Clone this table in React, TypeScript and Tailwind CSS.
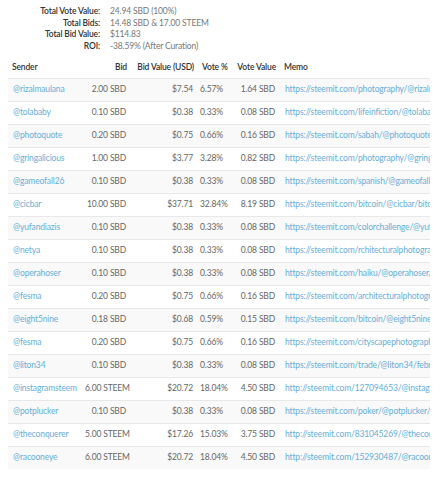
import React from "react";

type Row = {
  sender: string;
  bid: string;
  value: string;
  pct: string;
  vote: string;
  memo: string;
};

const rows: Row[] = [
  { sender: "@rizalmaulana", bid: "2.00 SBD", value: "$7.54", pct: "6.57%", vote: "1.64 SBD", memo: "https://steemit.com/photography/@rizalmaulana/the-beauty-of-nature" },
  { sender: "@tolababy", bid: "0.10 SBD", value: "$0.38", pct: "0.33%", vote: "0.08 SBD", memo: "https://steemit.com/lifeinfiction/@tolababy/my-story" },
  { sender: "@photoquote", bid: "0.20 SBD", value: "$0.75", pct: "0.66%", vote: "0.16 SBD", memo: "https://steemit.com/sabah/@photoquote/photo-of-the-day" },
  { sender: "@gringalicious", bid: "1.00 SBD", value: "$3.77", pct: "3.28%", vote: "0.82 SBD", memo: "https://steemit.com/photography/@gringalicious/winter" },
  { sender: "@gameofall26", bid: "0.10 SBD", value: "$0.38", pct: "0.33%", vote: "0.08 SBD", memo: "https://steemit.com/spanish/@gameofall26/juego" },
  { sender: "@cicbar", bid: "10.00 SBD", value: "$37.71", pct: "32.84%", vote: "8.19 SBD", memo: "https://steemit.com/bitcoin/@cicbar/bitcoin-price" },
  { sender: "@yufandiazis", bid: "0.10 SBD", value: "$0.38", pct: "0.33%", vote: "0.08 SBD", memo: "https://steemit.com/colorchallenge/@yufandiazis/red" },
  { sender: "@netya", bid: "0.10 SBD", value: "$0.38", pct: "0.33%", vote: "0.08 SBD", memo: "https://steemit.com/rchitecturalphotography/@netya/city" },
  { sender: "@operahoser", bid: "0.10 SBD", value: "$0.38", pct: "0.33%", vote: "0.08 SBD", memo: "https://steemit.com/haiku/@operahoser/haiku-day" },
  { sender: "@fesma", bid: "0.20 SBD", value: "$0.75", pct: "0.66%", vote: "0.16 SBD", memo: "https://steemit.com/architecturalphotography/@fesma/bridge" },
  { sender: "@eight5nine", bid: "0.18 SBD", value: "$0.68", pct: "0.59%", vote: "0.15 SBD", memo: "https://steemit.com/bitcoin/@eight5nine/crypto-news" },
  { sender: "@fesma", bid: "0.20 SBD", value: "$0.75", pct: "0.66%", vote: "0.16 SBD", memo: "https://steemit.com/cityscapephotography/@fesma/night" },
  { sender: "@liton34", bid: "0.10 SBD", value: "$0.38", pct: "0.33%", vote: "0.08 SBD", memo: "https://steemit.com/trade/@liton34/february-update" },
  { sender: "@instagramsteem", bid: "6.00 STEEM", value: "$20.72", pct: "18.04%", vote: "4.50 SBD", memo: "http://steemit.com/127094653/@instagramsteem/post" },
  { sender: "@potplucker", bid: "0.10 SBD", value: "$0.38", pct: "0.33%", vote: "0.08 SBD", memo: "https://steemit.com/poker/@potplucker/tournament" },
  { sender: "@theconquerer", bid: "5.00 STEEM", value: "$17.26", pct: "15.03%", vote: "3.75 SBD", memo: "http://steemit.com/831045269/@theconquerer/post" },
  { sender: "@racooneye", bid: "6.00 STEEM", value: "$20.72", pct: "18.04%", vote: "4.50 SBD", memo: "http://steemit.com/152930487/@racooneye/post" },
];

const summary = [
  ["Total Vote Value:", "24.94 SBD (100%)"],
  ["Total Bids:", "14.48 SBD & 17.00 STEEM"],
  ["Total Bid Value:", "$114.83"],
  ["ROI:", "-38.59% (After Curation)"],
];

const App = () => {
  return (
    <div className="w-[443px] h-[480px] bg-white overflow-hidden font-['Lato',sans-serif] text-[8.5px] tracking-[-0.15px]">
      {/* totals */}
      <div className="grid grid-cols-[100px_1fr] gap-x-[10px] pt-[6px] leading-[11.5px]">
        {summary.map(([label, value]) => (
          <React.Fragment key={label}>
            <div className="text-right font-semibold text-[#333]">{label}</div>
            <div className="text-[#777]">{value}</div>
          </React.Fragment>
        ))}
      </div>

      {/* bids table */}
      <div className="ml-[8px] mt-[5px] w-[422px] overflow-hidden">
        <table className="table-fixed border-collapse w-[674px] whitespace-nowrap">
          <colgroup>
            <col className="w-[72px]" />
            <col className="w-[51px]" />
            <col className="w-[67px]" />
            <col className="w-[29px]" />
            <col className="w-[53px]" />
            <col className="w-[402px]" />
          </colgroup>
          <thead>
            <tr className="h-[21px] text-[#333]">
              <th className="px-[4px] text-left font-semibold">Sender</th>
              <th className="px-[4px] text-right font-semibold">Bid</th>
              <th className="px-[4px] text-right font-semibold">Bid Value (USD)</th>
              <th className="px-[4px] text-right font-semibold">Vote %</th>
              <th className="px-[4px] text-right font-semibold">Vote Value</th>
              <th className="px-[4px] text-left font-semibold">Memo</th>
            </tr>
          </thead>
          <tbody>
            {rows.map((r, i) => (
              <tr
                key={i}
                className={`h-[23px] border-t border-[#e8e8e8] text-[#666] ${i % 2 === 0 ? "bg-[#f9f9f9]" : "bg-white"}`}
              >
                <td className="px-[5px] text-[#67aed8]">{r.sender}</td>
                <td className="px-[5px] text-right">{r.bid}</td>
                <td className="px-[5px] text-right">{r.value}</td>
                <td className="pl-[2px] pr-[5px] text-right">{r.pct}</td>
                <td className="px-[5px] text-right">{r.vote}</td>
                <td className="px-[5px] text-[#67aed8]">{r.memo}</td>
              </tr>
            ))}
          </tbody>
        </table>
      </div>
    </div>
  );
};

export default App;
